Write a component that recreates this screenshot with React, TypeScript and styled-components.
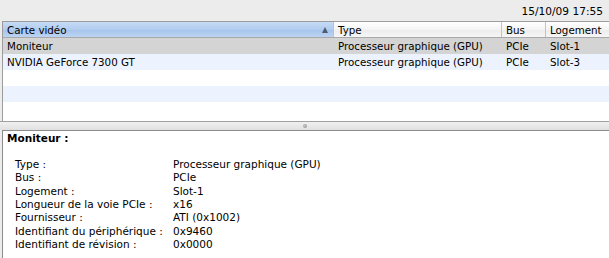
import React from "react";
import styled, { createGlobalStyle } from "styled-components";

const Global = createGlobalStyle`
  html, body { margin: 0; padding: 0; background: #ececec; }
  body { font-family: "DejaVu Sans", "Liberation Sans", sans-serif; }
`;

const Page = styled.div`
  width: 609px;
  height: 258px;
  overflow: hidden;
  background: #ececec;
  display: flex;
  flex-direction: column;
  font-size: 10.3px;
  color: #000;
`;

const TopBar = styled.div`
  height: 21px;
  display: flex;
  align-items: center;
  justify-content: flex-end;
  padding-right: 6px;
  box-sizing: border-box;
  font-size: 10.6px;
`;

const TablePanel = styled.div`
  margin-left: 2px;
  height: 100px;
  border-top: 1px solid #9c9c9c;
  border-left: 1px solid #9c9c9c;
  background: #fff;
  box-sizing: border-box;
  overflow: hidden;
`;

const cols = "331px 168px 44px 1fr";

const HeaderRow = styled.div`
  display: grid;
  grid-template-columns: ${cols};
  height: 15px;
  border-bottom: 1px solid #a8a8a8;
  box-sizing: content-box;
`;

const HeaderCell = styled.div<{ $sorted?: boolean; $last?: boolean }>`
  position: relative;
  display: flex;
  align-items: center;
  padding-left: 4px;
  border-right: ${(p) => (p.$last ? "none" : "1px solid #c2c2c2")};
  background: ${(p) =>
    p.$sorted
      ? "linear-gradient(#c6dbf5, #b2ccef 50%, #a5c3ec 51%, #bdd4f3)"
      : "linear-gradient(#ffffff, #f4f4f4 50%, #ececec 51%, #f6f6f6)"};
  white-space: nowrap;
`;

const SortArrow = styled.span`
  position: absolute;
  right: 5px;
  top: 5px;
  width: 0;
  height: 0;
  border-left: 3.5px solid transparent;
  border-right: 3.5px solid transparent;
  border-bottom: 6px solid #4d5d72;
`;

const Row = styled.div<{ $bg: string }>`
  display: grid;
  grid-template-columns: ${cols};
  height: 16px;
  background: ${(p) => p.$bg};
`;

const Cell = styled.div`
  display: flex;
  align-items: center;
  padding-left: 4px;
  white-space: nowrap;
  border-right: 1px solid transparent;
`;

const Splitter = styled.div`
  height: 8px;
  border-top: 1px solid #a0a0a0;
  background: linear-gradient(#f0f0f0, #e0e0e0);
  display: flex;
  justify-content: center;
  align-items: center;
`;

const Dimple = styled.div`
  width: 4px;
  height: 4px;
  border-radius: 50%;
  background: radial-gradient(circle at 40% 40%, #c8c8c8, #8a8a8a);
`;

const DetailPanel = styled.div`
  flex: 1;
  margin-left: 2px;
  border-top: 1px solid #8c8c8c;
  border-left: 1px solid #8c8c8c;
  background: #fff;
  padding: 1px 0 0 4px;
  box-sizing: border-box;
  font-size: 10.5px;
`;

const Title = styled.div`
  font-weight: bold;
  height: 13px;
  line-height: 13px;
  margin-bottom: 13px;
`;

const Props = styled.div`
  display: grid;
  grid-template-columns: 158px 1fr;
  padding-left: 8px;
  grid-auto-rows: 13.33px;
  line-height: 13.33px;
`;

const Label = styled.div`
  white-space: nowrap;
`;

const Value = styled.div`
  white-space: nowrap;
`;

const rows = [
  { name: "Moniteur", type: "Processeur graphique (GPU)", bus: "PCIe", slot: "Slot-1", bg: "#d4d4d4" },
  { name: "NVIDIA GeForce 7300 GT", type: "Processeur graphique (GPU)", bus: "PCIe", slot: "Slot-3", bg: "#edf3fe" },
  { name: "", type: "", bus: "", slot: "", bg: "#ffffff" },
  { name: "", type: "", bus: "", slot: "", bg: "#edf3fe" },
  { name: "", type: "", bus: "", slot: "", bg: "#ffffff" },
];

const details: [string, string][] = [
  ["Type :", "Processeur graphique (GPU)"],
  ["Bus :", "PCIe"],
  ["Logement :", "Slot-1"],
  ["Longueur de la voie PCIe :", "x16"],
  ["Fournisseur :", "ATI (0x1002)"],
  ["Identifiant du périphérique :", "0x9460"],
  ["Identifiant de révision :", "0x0000"],
];

export default function App() {
  return (
    <Page>
      <Global />
      <TopBar>15/10/09 17:55</TopBar>
      <TablePanel>
        <HeaderRow>
          <HeaderCell $sorted>
            Carte vidéo
            <SortArrow />
          </HeaderCell>
          <HeaderCell>Type</HeaderCell>
          <HeaderCell>Bus</HeaderCell>
          <HeaderCell $last>Logement</HeaderCell>
        </HeaderRow>
        {rows.map((r, i) => (
          <Row key={i} $bg={r.bg}>
            <Cell>{r.name}</Cell>
            <Cell>{r.type}</Cell>
            <Cell>{r.bus}</Cell>
            <Cell>{r.slot}</Cell>
          </Row>
        ))}
      </TablePanel>
      <Splitter>
        <Dimple />
      </Splitter>
      <DetailPanel>
        <Title>Moniteur :</Title>
        <Props>
          {details.map(([l, v]) => (
            <React.Fragment key={l}>
              <Label>{l}</Label>
              <Value>{v}</Value>
            </React.Fragment>
          ))}
        </Props>
      </DetailPanel>
    </Page>
  );
}
